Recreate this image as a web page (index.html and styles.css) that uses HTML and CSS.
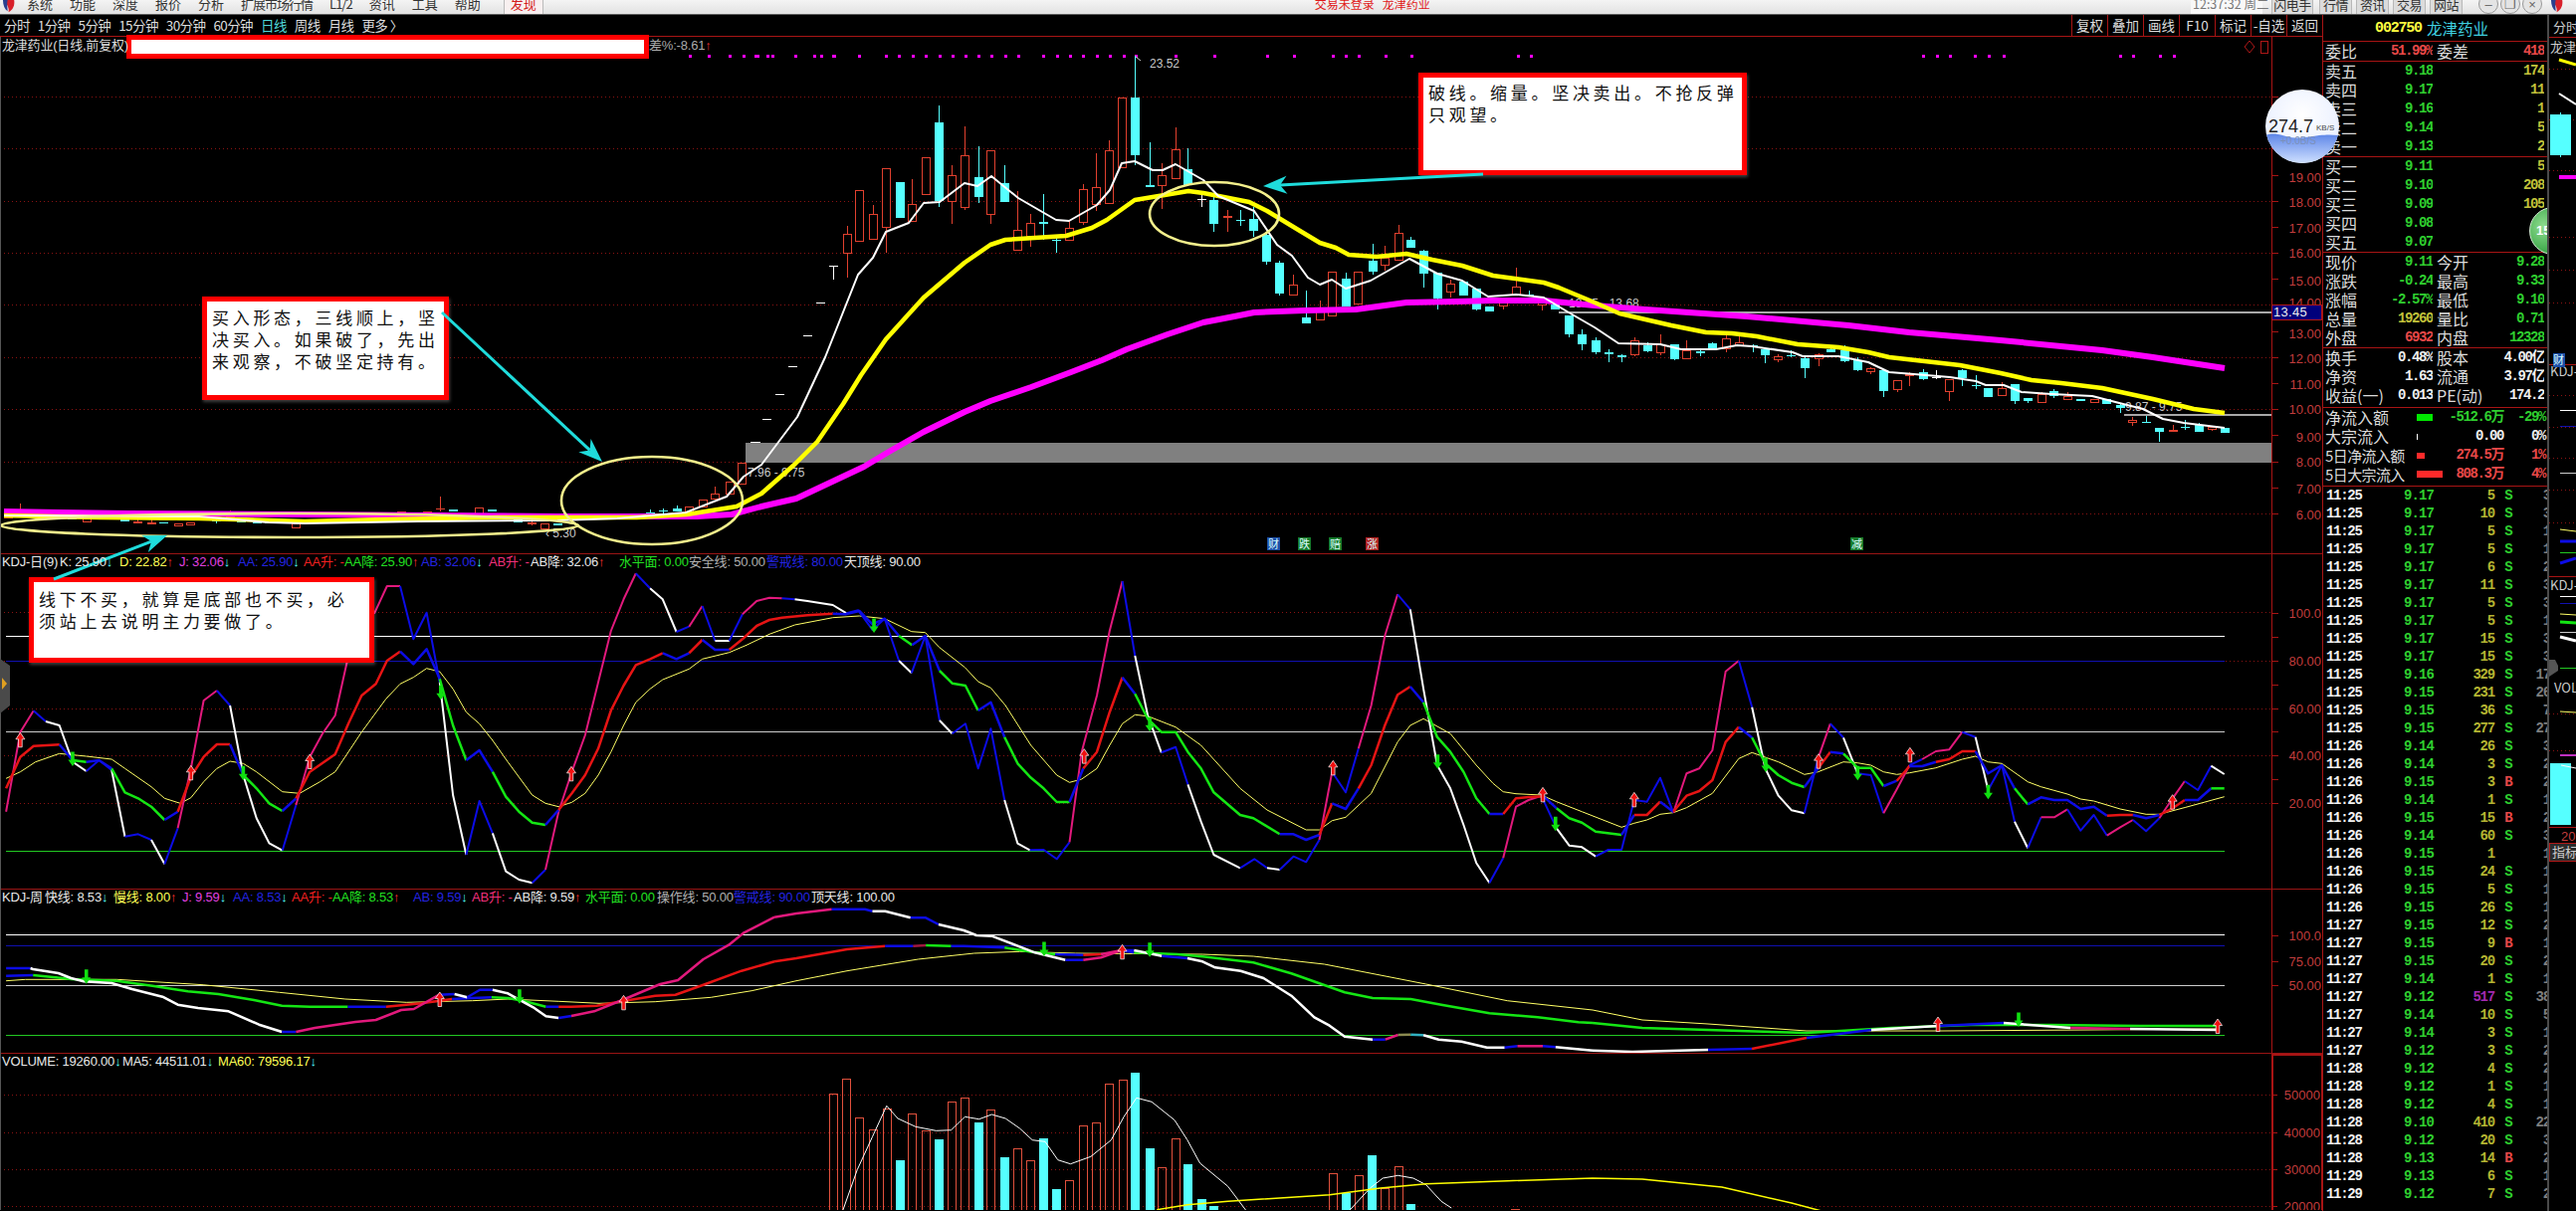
FILE: index.html
```html
<!DOCTYPE html>
<html lang="zh-CN">
<head>
<meta charset="utf-8">
<title>龙津药业</title>
<link rel="stylesheet" href="styles.css">
</head>
<body>
<div class="app">
  <header class="titlebar">
    <svg class="logo" viewBox="0 0 16 15"><path d="M2 0h11c1 5-1 11-6 13C8 9 6 6 2 0z" fill="#d8202a"/><path d="M1 0c0 6 2 10 5 12C6 8 5 4 6 0z" fill="#2a3f8f"/></svg>
    <nav class="menu">
      <span>系统</span><span>功能</span><span>深度</span><span>报价</span><span>分析</span><span class="wide">扩展市场行情</span><span class="wide">L1/2</span><span>资讯</span><span>工具</span><span>帮助</span>
    </nav>
    <span class="find">发现</span>
    <span class="notice">交易未登录&nbsp;&nbsp;&nbsp;龙津药业</span>
    <div class="right-cluster">
      <span class="clock">12:37:32 周二</span>
      <span class="tab tab-wide">闪电手</span><span class="tab">行情</span><span class="tab">资讯</span><span class="tab">交易</span><span class="tab">网站</span>
      <span class="winbtn">–</span><span class="winbtn">❐</span><span class="winbtn">×</span>
      <svg class="logo logo-side" viewBox="0 0 16 15"><path d="M2 0h11c1 5-1 11-6 13C8 9 6 6 2 0z" fill="#d8202a"/><path d="M1 0c0 6 2 10 5 12C6 8 5 4 6 0z" fill="#2a3f8f"/></svg>
    </div>
  </header>

  <div class="workspace">
    <main class="mainwin">
      <div class="chartcol">
        <div class="toolbar">
          <div class="periods">
            <span>分时</span><span>1分钟</span><span>5分钟</span><span>15分钟</span><span>30分钟</span><span>60分钟</span><span class="on">日线</span><span>周线</span><span>月线</span><span>更多 〉</span>
          </div>
          <div class="tools">
            <span>复权</span><span>叠加</span><span>画线</span><span>F10</span><span>标记</span><span>-自选</span><span>返回</span>
          </div>
        </div>
        <div class="panes" id="panes">
          <section class="pane pane-main">
            <div class="plot" id="plot-main"><div class="legend legend-main"><span class="lg-title">龙津药业(日线,前复权)</span><span class="lg-tail">差%:-8.61<i class="up">↑</i></span></div></div>
            <div class="axis" id="axis-main"></div>
          </section>
          <section class="pane pane-kdj">
            <div class="plot" id="plot-kdj"><div class="legend" id="lg-kdj"></div></div>
            <div class="axis" id="axis-kdj"></div>
          </section>
          <section class="pane pane-week">
            <div class="plot" id="plot-week"><div class="legend" id="lg-week"></div></div>
            <div class="axis" id="axis-week"></div>
          </section>
          <section class="pane pane-vol">
            <div class="plot" id="plot-vol"><div class="legend" id="lg-vol"></div></div>
            <div class="axis axis-vol" id="axis-vol"></div>
          </section>
          <div class="banner"></div>
          <div class="callout c1">买入形态，三线顺上，坚<br>决买入。如果破了，先出<br>来观察，不破坚定持有。</div>
          <div class="callout c2">线下不买，就算是底部也不买，必<br>须站上去说明主力要做了。</div>
          <div class="callout c3">破线。缩量。坚决卖出。不抢反弹<br>只观望。</div>
          <svg class="overlay" id="overlay" viewBox="0 38 2333 1179"></svg>
          <div class="pricetag">13.45</div>
        </div>
      </div>

      <aside class="quote">
        <div class="q-title"><span class="code">002750</span><span class="name">龙津药业</span></div>
        <div class="q-sec" id="q-ratio"></div>
        <div class="q-sec" id="q-sell"></div>
        <div class="q-sec" id="q-buy"></div>
        <div class="q-sec" id="q-price"></div>
        <div class="q-sec q-pad" id="q-fund"></div>
        <div class="q-sec q-pad" id="q-flow"></div>
        <div class="trades" id="trades"></div>
        <div class="bubble">15</div>
      </aside>
    </main>
    <div class="gutter"></div>
    <div class="sidewin" id="side"></div>
    <svg class="speed" viewBox="0 0 74 74">
      <defs>
        <radialGradient id="sp" cx="50%" cy="35%" r="70%"><stop offset="0" stop-color="#fff"/><stop offset="1" stop-color="#e4ecff"/></radialGradient>
        <linearGradient id="wv" x1="0" y1="0" x2="0" y2="1"><stop offset="0" stop-color="#5d86e8"/><stop offset="1" stop-color="#cfe0ff"/></linearGradient>
        <clipPath id="spc"><ellipse cx="37" cy="37" rx="37" ry="37"/></clipPath>
      </defs>
      <ellipse cx="37" cy="37" rx="37" ry="37" fill="url(#sp)"/>
      <path clip-path="url(#spc)" d="M0 46c14-5 22 5 40 2s24-3 34-2v28H0z" fill="url(#wv)"/>
      <text class="sp-main" x="3" y="43">274.7</text>
      <text class="sp-unit" x="51" y="41">KB/S</text>
      <text class="sp-sub" x="15" y="55">+0.0B/S</text>
    </svg>
  </div>
</div>
<script src="script.js"></script>
</body>
</html>
```
FILE: styles.css
```css
* { box-sizing: border-box; }
html, body { margin: 0; padding: 0; background: #000; }
body { font-family: "Liberation Sans", "Noto Sans CJK SC", sans-serif; overflow: hidden; }
i { font-style: normal; }

.app { width: 2588px; height: 1217px; display: flex; flex-direction: column; background: #000; overflow: hidden; position: relative; }

/* title bar */
.titlebar { height: 15px; flex: none; display: flex; align-items: flex-start; overflow: hidden;
  background: linear-gradient(#f4f4f4, #e2e2e2); border-bottom: 1px solid #5a5a5a; font: 13px/20px "Noto Sans CJK SC", sans-serif; color: #333; padding-left: 2px; }
.titlebar span { margin-top: -6px; }
.logo { width: 15px; height: 14px; flex: none; }
.menu { display: flex; gap: 17px; margin-left: 10px; flex: none; }
.menu .wide { letter-spacing: -1px; }
.find { margin-left: 23px; width: 40px; height: 26px; text-align: center; color: #d32020; background: #f8f0f0; border-left: 1px solid #bbb; border-right: 1px solid #bbb; flex: none; }
.notice { margin-left: 775px; color: #e01818; flex: none; font-size: 12px; }
.right-cluster { margin-left: auto; display: flex; align-items: flex-start; flex: none; }
.clock { width: 72px; margin-right: 9px; padding-left: 2px; background: #f8f8f8; color: #777; height: 26px; font-size: 12.5px; white-space: nowrap; }
.tab { width: 33px; height: 26px; margin-right: 4px; text-align: center; background: #dcdcdc; border: 1px solid #b8b8b8; letter-spacing: -.5px; }
.tab-wide { width: 42px; margin-right: 6px; }
.tab + .winbtn { margin-left: 12px; }
.winbtn { width: 20px; height: 20px; margin-top: -6px; margin-right: 2px; border-radius: 50%; border: 1px solid #999; background: #e4e4e4; text-align: center; color: #666; font: 13px/20px "Liberation Sans", sans-serif; }
.logo-side { margin-left: 6px; margin-right: 11px; }

/* workspace */
.workspace { flex: 1; display: flex; min-height: 0; position: relative; }
.mainwin { width: 2559px; flex: none; display: flex; }
.gutter { width: 2px; flex: none; background: #4a4a4a; }
.sidewin { flex: 1; overflow: hidden; }
.sidewin svg { display: block; }

.chartcol { width: 2333px; flex: none; display: flex; flex-direction: column; }
.toolbar { height: 22px; flex: none; display: flex; justify-content: space-between; border-bottom: 1px solid #a81414; color: #ddd; font: 13.5px/21px "Noto Sans CJK SC", sans-serif; }
.periods { display: flex; padding-left: 4px; gap: 8px; letter-spacing: -.6px; }
.periods span { white-space: nowrap; }
.periods .on { color: #4fd8d8; }
.tools { display: flex; }
.tools span { width: 36px; text-align: center; border-left: 1px solid #a81414; }

.panes { flex: 1; display: flex; flex-direction: column; position: relative; min-height: 0; }
.pane { display: flex; flex: none; border-bottom: 1px solid #9a1414; }
.pane-main { height: 520px; }
.pane-kdj { height: 337px; }
.pane-week { height: 165px; }
.pane-vol { height: 157px; border-bottom: 0; }
.plot { width: 2282px; flex: none; position: relative; overflow: hidden; }
.plot svg { position: absolute; left: 0; top: 0; display: block; }
.axis { flex: 1; border-left: 1px solid #a81414; overflow: hidden; position: relative; }
.axis svg { display: block; }
.axis-vol { border: 2px solid #a81414; border-bottom: 0; border-right-width: 1px; }
.axis-vol svg { margin: -2px 0 0 -2px; }

.legend { position: relative; z-index: 1; display: flex; height: 16px; padding-left: 2px; font: 13px/16px "Liberation Sans", "Noto Sans CJK SC", sans-serif; white-space: nowrap; letter-spacing: -.2px; }
.legend span { flex: none; display: block; }
.legend .up, .lg-tail .up { color: #f33; font-weight: 700; }
.legend .dn { color: #5ff; font-weight: 700; }
.legend-main { height: 18px; line-height: 18px; color: #ddd; }
.lg-title { width: 650px; }
.lg-tail { color: #aaa; }

.c-wh { color: #e8e8e8; } .c-ye { color: #ffff55; } .c-mg { color: #e040e0; } .c-bl { color: #2424e0; }
.c-re { color: #f02020; } .c-gr { color: #22e022; } .c-pk { color: #f0307a; } .c-gy { color: #b0b0b0; }

.banner { position: absolute; left: 127px; top: -2px; width: 525px; height: 24px; background: #fff; border: 5px solid #ff0000; }
.callout { position: absolute; background: #fff; border: 5px solid #f00; color: #111; font: 17px/22px "Noto Sans CJK SC", sans-serif; letter-spacing: 3.7px; padding: 5px 5px; white-space: nowrap; box-shadow: 1px 2px 3px rgba(255,255,255,.25); }
.c1 { left: 203px; top: 261px; width: 248px; height: 104px; }
.c2 { left: 29px; top: 543px; width: 347px; height: 86px; padding-top: 6px; }
.c3 { left: 1425px; top: 36px; width: 330px; height: 103px; padding-top: 4px; }
.overlay { position: absolute; left: 0; top: 0; width: 2333px; height: 1179px; pointer-events: none; }
.pricetag { position: absolute; left: 2282px; top: 269px; width: 51px; height: 16px; background: #00007c; border: 1px solid #b01818; color: #eee; font: 13px/14px "Liberation Sans", sans-serif; padding-left: 1px; letter-spacing: .3px; }

/* quote */
.quote { flex: 1; border-left: 1px solid #a81414; position: relative; overflow: hidden; color: #ddd; }
.q-title { height: 27px; border-bottom: 1px solid #a81414; display: flex; justify-content: center; align-items: center; gap: 5px; padding-right: 7px; }
.code { color: #ffff40; font: 700 15px "Liberation Mono", monospace; letter-spacing: -1.2px; }
.name { color: #3fd0e0; font: 15.5px "Noto Sans CJK SC", sans-serif; }
.q-sec { border-bottom: 1px solid #a81414; }
.q-pad { padding-bottom: 2px; }
.qrow { height: 19px; display: grid; grid-template-columns: 108px 108px; column-gap: 4px; padding-left: 2px; }
.cell { display: flex; justify-content: space-between; align-items: center; overflow: hidden; }
.lbl { font: 16px/19px "Noto Sans CJK SC", sans-serif; color: #dcdcdc; white-space: nowrap; flex: none; }
.num { font: 700 14px/19px "Liberation Mono", "Noto Sans CJK SC", monospace; letter-spacing: -1.4px; white-space: nowrap; margin-left: auto; }
.g { color: #2fcf2f; } .o { color: #c2c23a; } .r { color: #e84848; } .w { color: #eee; } .n { color: #7e7e7e; } .v { color: #a32ab0; } .e { color: #b4b432; }
.frow { height: 19px; display: grid; grid-template-columns: 92px 30px 57px 42px; padding-left: 2px; align-items: center; }
.frow .lbl-s { font: 15px/19px "Noto Sans CJK SC", sans-serif; letter-spacing: -.6px; white-space: nowrap; color: #dcdcdc; }
.frow .num { text-align: right; }
.fbar { display: block; height: 7px; }
.fb1 { width: 16px; background: #00e800; }
.fb2 { width: 1px; background: #fff; height: 6px; }
.fb3 { width: 8px; background: #ff2a2a; height: 6px; }
.fb4 { width: 26px; background: #ff2a2a; }
.trow { height: 18px; display: grid; grid-template-columns: 78px 30px 61px 25px 31px; padding-left: 3px; font: 700 14px/18px "Liberation Mono", monospace; letter-spacing: -.9px; }
.trow .t-t { color: #f2f2f2; letter-spacing: -1.3px; }
.trow .t-v, .trow .t-n { text-align: right; letter-spacing: -1.2px; }
.trow .t-s { text-align: center; padding-left: 3px; }
.bubble { position: absolute; left: 207px; top: 193px; width: 48px; height: 48px; border-radius: 50%; border: 1px solid #cfe8cf; background: radial-gradient(circle at 30% 40%, #8fdc8f, #2c9c3c 75%); color: #fff; font: 700 13px/46px "Liberation Sans", sans-serif; padding-left: 6px; }

.speed { position: absolute; left: 2276px; top: 75px; width: 74px; height: 74px; }
.sp-main { font: 18px "Liberation Sans", sans-serif; fill: #222; }
.sp-unit { font: 8px "Liberation Sans", sans-serif; fill: #444; }
.sp-sub { font: 10px "Liberation Sans", sans-serif; fill: #7c90b8; }

/* svg text */
.tx { font: 12px "Liberation Sans", sans-serif; fill: #c8c8c8; }
.ax { font: 13px "Liberation Sans", sans-serif; fill: #c23c3c; text-anchor: end; }
.mk { font: 11px "Noto Sans CJK SC", sans-serif; fill: #dff; }
.sd { font: 13px "Noto Sans CJK SC", "Liberation Sans", sans-serif; fill: #ccc; }
.sd-r { font: 13px "Liberation Sans", sans-serif; fill: #c23c3c; }
```
FILE: script.js
```js
(function () {
  var $ = function (id) { return document.getElementById(id); };
  var COL = { p: '#e2197c', b: '#0c0ce6', w: '#ffffff', r: '#e61414', g: '#14e614', y: '#ffff66', d: '#a01840', n: '#8a8a50', c: '#30b0c0', m: '#ff00ff', Y: '#ffff00' };
  var SX = 1.96, SY = 3;

  function svg(x, y, w, h, inner, cls) {
    return '<svg xmlns="http://www.w3.org/2000/svg" width="' + w + '" height="' + h + '" viewBox="' + x + ' ' + y + ' ' + w + ' ' + h + '"' + (cls ? ' class="' + cls + '"' : '') + '>' + inner + '</svg>';
  }
  function ln(x1, y1, x2, y2, c, w, extra) {
    return '<line x1="' + x1 + '" y1="' + y1 + '" x2="' + x2 + '" y2="' + y2 + '" stroke="' + c + '" stroke-width="' + (w || 1) + '" ' + (extra || '') + '/>';
  }
  function rect(x, y, w, h, f, extra) {
    return '<rect x="' + x + '" y="' + y + '" width="' + w + '" height="' + h + '" fill="' + f + '" ' + (extra || '') + '/>';
  }
  function dots(ys, c) {
    return ys.map(function (y) { return ln(0, y + .5, 2282, y + .5, c || '#8a1212', 1, 'stroke-dasharray="1 3"'); }).join('');
  }
  /* A series is written as chunks of crops: [x0, y0, scaleX, scaleY, "c x,y x,y c x,y"]. */
  function series(chunks, width, defaultCol) {
    var out = '', prev = null, col = defaultCol || 'w', run = [];
    function flush() {
      if (run.length > 1) out += '<polyline fill="none" stroke-linejoin="round" stroke="' + COL[col] + '" stroke-width="' + width + '" points="' + run.join(' ') + '"/>';
    }
    chunks.forEach(function (ch) {
      ch[4].trim().split(/\s+/).forEach(function (tok) {
        if (tok.indexOf(',') < 0) {
          flush();
          col = tok;
          run = prev ? [prev] : [];
          return;
        }
        var a = tok.split(',');
        var pt = (ch[0] + a[0] / ch[2]).toFixed(1) + ',' + (ch[1] + a[1] / ch[3]).toFixed(1);
        run.push(pt);
        prev = pt;
      });
    });
    flush();
    return out;
  }
  function upArrow(x, y) {
    return '<path d="M' + x + ' ' + (y - 7) + 'l4.5 6.5h-2.7v8h-3.6v-8h-2.7z" fill="#f01010" stroke="#fff" stroke-width=".7"/>';
  }
  function dnArrow(x, y) {
    return '<path d="M' + x + ' ' + (y + 7) + 'l4.5 -6.5h-2.7v-8h-3.6v8h-2.7z" fill="#10e010"/>';
  }
  function arrows(base, ups, dns) {
    var s = '';
    ups.forEach(function (p) { s += upArrow(base[0] + p[0] / (p[2] || SX), base[1] + p[1] / (p[2] || SY)); });
    dns.forEach(function (p) { s += dnArrow(base[0] + p[0] / (p[2] || SX), base[1] + p[1] / (p[2] || SY)); });
    return s;
  }

  /* ---------- candles: [cropX, bodyTop, bodyBottom, high, low, type] in crop pixels ---------- */
  var Z4 = [0, 290], Z5 = [750, 50], Z8 = [1500, 250];
  var candles = [
    [Z4, [[15,683,692,0,0,'r'],[40,682,688,650,0,'r'],[90,688,690,0,0,'c'],[142,695,699,0,0,'c'],[170,695,706,0,0,'r'],[195,690,696,0,0,'r'],[245,697,704,0,0,'c'],[270,704,706,695,712,'r'],[298,707,709,700,714,'r'],[322,707,712,0,0,'c'],[350,710,718,0,0,'r'],[375,708,714,0,0,'r'],[425,703,705,695,712,'c'],[453,680,690,672,0,'r'],[475,704,708,0,0,'c'],[505,706,710,0,0,'c'],[530,708,712,0,0,'c'],[582,710,722,0,0,'r'],[790,675,682,0,0,'r'],[815,680,690,0,0,'r'],[840,675,685,0,0,'r'],[867,665,669,630,675,'R'],[892,670,675,0,0,'c'],[943,663,680,0,0,'r'],[968,668,675,0,0,'c'],[995,680,685,0,0,'r'],[1020,700,708,692,0,'c'],[1046,707,709,700,716,'r'],[1072,710,725,0,0,'r'],[1097,712,716,0,0,'c'],[1253,680,685,0,0,'r'],[1280,677,679,670,684,'c'],[1305,672,674,665,680,'c'],[1332,667,675,658,0,'c'],[1357,660,675,0,0,'r'],[1383,638,660,0,0,'r'],[1408,620,635,600,0,'r'],[1436,585,622,0,0,'r'],[1461,528,590,0,0,'r'],
      [1485,465,467,0,0,'w'],[1510,396,398,0,0,'w'],[1535,321,323,0,0,'w'],[1560,237,239,0,0,'w']]],
    [Z5, [[17,1186,1188,0,0,'w'],[145,766,768,0,0,'w'],[119,864,866,0,0,'w'],[171,655,657,655,697,'w'],
      [197,558,616,533,690,'r'],[222,427,578,0,0,'r'],[249,498,572,470,0,'r'],[275,361,538,0,615,'r'],[301,402,510,0,0,'c'],[326,468,520,393,0,'r'],[352,327,437,0,0,'r'],[379,222,458,171,478,'c'],[404,381,460,350,527,'r'],[430,321,476,235,485,'r'],[456,387,446,295,464,'c'],[481,307,499,0,527,'r'],[508,405,461,352,0,'c'],[534,547,605,430,0,'r'],[559,526,563,498,598,'r'],[585,521,527,438,575,'c'],[610,576,579,560,614,'c'],[636,541,577,518,0,'r'],[662,424,523,408,532,'r'],[688,418,467,316,490,'r'],[714,307,466,277,0,'r'],[739,148,358,0,0,'r'],[765,147,321,20,350,'c'],[793,411,416,282,0,'c'],[818,382,412,345,482,'r'],[844,304,391,238,0,'r'],[869,364,411,300,0,'c'],[895,454,457,430,478,'w'],[920,456,527,440,552,'c'],[947,505,509,487,552,'R'],[972,516,519,487,535,'c'],[998,514,549,478,566,'c'],[1024,560,642,552,650,'c'],[1049,645,738,640,745,'c'],[1076,712,740,682,745,'r'],[1102,810,827,728,0,'c'],[1128,788,817,760,0,'r'],[1153,673,803,0,0,'r'],[1179,693,777,675,0,'c'],[1204,673,767,0,0,'r'],[1232,639,672,588,680,'c'],[1257,630,650,595,668,'r'],[1283,556,635,530,0,'r'],[1308,576,600,567,0,'c'],[1333,610,677,605,720,'c'],[1360,675,752,0,785,'c'],[1386,708,733,695,750,'r'],[1411,702,744,0,0,'c'],[1437,722,785,0,790,'c'],[1463,776,793,0,0,'c'],[1489,760,775,0,785,'r']]],
    [Z8, [[45,118,140,60,0,'r'],[71,140,148,130,0,'c'],[97,155,170,0,188,'r'],[122,170,186,0,0,'c'],[148,204,262,0,270,'c'],[175,262,290,247,308,'c'],[201,280,315,270,320,'c'],[227,316,322,306,345,'c'],[252,324,331,320,345,'c'],[278,278,320,270,326,'r'],[304,294,312,285,316,'c'],[330,292,315,262,325,'r'],[356,292,336,0,338,'c'],[381,310,334,280,336,'r'],[407,311,318,305,326,'c'],[432,288,306,285,0,'c'],[459,274,304,258,316,'r'],[485,284,294,268,0,'r'],[511,295,297,290,315,'c'],[536,306,325,0,347,'c'],[561,327,335,320,345,'r'],[587,323,325,310,330,'c'],[614,332,363,325,392,'c'],[640,322,332,318,357,'r'],[665,305,314,295,0,'c'],[691,310,342,295,345,'c'],[717,338,369,330,371,'c'],[743,362,371,360,380,'r'],[769,368,431,365,450,'c'],[795,398,425,0,435,'r'],[820,382,384,375,418,'r'],[846,376,397,365,399,'c'],[872,390,392,370,395,'w'],[898,397,433,0,462,'r'],[924,370,393,365,418,'c'],[950,414,416,385,425,'c'],[975,423,449,0,0,'c'],[1002,422,443,405,0,'r'],[1027,412,462,0,470,'c'],[1053,454,461,0,468,'c'],[1079,440,465,435,0,'r'],[1104,433,448,425,454,'c'],[1130,448,457,435,0,'r'],[1157,457,462,0,0,'c'],[1183,457,466,0,0,'r'],[1208,457,470,0,0,'c'],[1234,475,483,470,498,'c'],[1259,519,526,510,537,'r'],[1286,524,526,507,527,'c'],[1312,543,555,0,585,'c'],[1338,550,554,535,0,'R'],[1363,539,541,520,550,'c'],[1389,535,555,527,0,'c'],[1415,541,545,0,553,'r'],[1441,544,557,0,0,'c']]]
  ];
  function candleSvg() {
    var s = '';
    candles.forEach(function (blk) {
      var b = blk[0];
      blk[1].forEach(function (c) {
        var x = Math.round(b[0] + c[0] / SX), t = Math.round(b[1] + c[1] / SY), bt = Math.round(b[1] + c[2] / SY);
        var hi = c[3] ? Math.round(b[1] + c[3] / SY) : t, lo = c[4] ? Math.round(b[1] + c[4] / SY) : bt;
        var col = c[5] === 'c' ? '#55ffff' : c[5] === 'w' ? '#ffffff' : '#e0402e';
        if (hi < t) s += ln(x + .5, hi, x + .5, t, col);
        if (lo > bt) s += ln(x + .5, bt, x + .5, lo, col);
        if (c[5] === 'r') s += '<rect x="' + (x - 3.5) + '" y="' + (t + .5) + '" width="8" height="' + Math.max(bt - t, 1) + '" fill="#000" stroke="' + col + '"/>';
        else s += rect(x - 4, t, 9, Math.max(bt - t, 1), col);
      });
    });
    return s;
  }

  /* ---------- main pane ---------- */
  var ma60 = 'm 4,515 60,516 130,517 300,518 560,520 640,520 700,520 735,518 765,510 800,502 868,470 893,455 928,435 969,415 995,404 1036,390 1076,375 1107,363 1132,352 1173,337 1209,325 1240,319 1260,315 1311,313 1362,312 1413,305 1464,304 1500,303 1551,303 1602,308 1653,312 1755,319 1857,328 1918,335 2010,343 2112,353 2163,360 2235,371';
  var ma20 = 'Y 4,519 100,521 200,522 306,525 388,523 500,521 640,521 690,518 715,514 740,510 765,497 798,468 821,445 847,407 865,378 890,342 928,300 969,265 995,247 1010,242 1071,238 1097,230 1112,222 1140,202 1158,199 1194,193 1209,195 1255,204 1273,213 1306,233 1326,245 1342,250 1355,257 1383,259 1413,256 1439,262 1469,268 1500,278 1551,285 1566,290 1602,305 1627,316 1679,328 1714,335 1740,336 1765,339 1806,347 1847,350 1877,355 1898,360 1969,368 2010,376 2041,383 2071,386 2112,391 2163,402 2204,412 2235,416';
  var ma5 = 'w 4,519 200,520 270,526 306,527 420,525 560,524 620,522 689,516 730,500 747,480 765,468 801,420 829,360 862,277 877,260 890,234 913,225 928,205 944,204 969,185 982,188 996,178 1023,200 1061,222 1074,223 1102,207 1115,192 1127,165 1140,163 1158,172 1168,172 1181,166 1209,182 1224,198 1260,213 1283,247 1298,258 1314,280 1326,287 1338,282 1352,291 1377,283 1416,261 1444,276 1469,283 1495,299 1523,297 1551,300 1576,315 1602,330 1626,346 1668,347 1689,352 1724,352 1745,348 1760,349 1801,355 1811,359 1847,359 1877,365 1898,375 1923,377 1959,380 1985,384 1995,388 2013,388 2031,395 2061,397 2102,399 2133,407 2153,412 2173,422 2194,426 2235,431';

  var magentaDots = [692,711,732,746,760,775,798,817,836];
  [15,40,95,145,170,220,272,298,325,350,378,403,430,455,480,507,533,583,610,635,660,687,713,740,765,843,920,1023,1077,1153,1178,1203,1257,1308,1517,1543].forEach(function (p) { magentaDots.push(Math.round(750 + p / SX)); });
  magentaDots = magentaDots.concat([1931,1945,1958,1983,1997,2012,2129,2142,2169,2183]);

  function marker(x, t, bg) {
    return rect(x, 541, 13, 13, bg) + '<text class="mk" x="' + (x + 1) + '" y="552">' + t + '</text>';
  }
  var main = '';
  main += dots([98,150,203,255,307,360,412,465,517]);
  main += rect(749, 446, 1533, 20, '#808080');
  main += rect(1566, 314, 716, 2, '#a8a8a8') + rect(2134, 417, 148, 2, '#a8a8a8');
  magentaDots.forEach(function (x) { main += rect(x, 56, 3, 3, '#ff00ff'); });
  main += '<text class="tx" x="751" y="480">7.96 - 9.75</text>';
  main += '<text class="tx" x="1576" y="310">13.45 - 13.68</text>';
  main += '<text class="tx" x="2135" y="414">9.87 - 9.75</text>';
  main += candleSvg();
  main += series([[0,0,1,1,ma60]], 6);
  main += series([[0,0,1,1,ma20]], 4.5);
  main += series([[0,0,1,1,ma5]], 2);
  main += ln(1141, 58, 1146, 62, '#ccc') + '<text class="tx" x="1155" y="69">23.52</text>';
  main += '<text class="tx" x="548" y="541">‹ 5.30</text>';
  main += marker(1273, '财', '#1c4fa8') + marker(1304, '跌', '#157a2a') + marker(1335, '赔', '#157a2a') + marker(1372, '涨', '#b02020');
  main += marker(1859, '减', '#157a2a');
  main += '<path d="M2260 42l5 6-5 6-5-6z" fill="none" stroke="#b01818"/><rect x="2271.5" y="42.5" width="7" height="12" fill="none" stroke="#b01818"/>';
  $('plot-main').insertAdjacentHTML('afterbegin', svg(0, 38, 2282, 519, main));

  /* ---------- KDJ daily ---------- */
  var kJ = [
    [0,560,SX,SY,'p 12,770 40,530 66,466 b 90,498 w 117,510 143,620 170,648 b 195,615 220,645 w 246,845 b 272,838 298,855 w 324,928 b 350,820 p 376,640 401,435 427,405 b 453,450 w 479,660 505,790 530,865 556,887 b 583,750 p 610,605 635,535 660,480 686,300 712,200 738,170 762,90 788,90 b 814,250 840,170 866,380 w 892,720 918,900 b 944,738 970,835 w 996,950 1022,975 1048,985 b 1074,945 p 1100,770 1126,650 1152,540 1178,380 1203,225 1228,130 1252,52 b 1280,97 w 1305,130 1332,228 b 1357,212 p 1383,150 b 1408,255 w 1436,255 b 1462,175'],
    [750,560,SX,SY,'p 20,135 45,125 70,127 b 95,130 w 120,135 170,147 197,172 b 220,163 248,222 272,188 300,315 w 325,352 b 352,240 380,495 w 405,535 b 431,505 456,640 481,520 508,735 w 534,866 558,886 b 585,885 611,913 636,862 p 660,590 690,420 715,225 740,75 b 765,300 w 790,480 817,592 b 845,575 869,688 w 895,800 920,900 972,940 b 1000,913 1025,940 w 1050,945 b 1077,905 1102,922 1128,855 p 1153,650 b 1180,712 1205,580 p 1230,450 1257,240 1282,115 b 1307,160 w 1333,400 1360,630 1386,700 1412,810 1437,925 1463,985'],
    [1500,560,SX,SY,'b 20,910 p 45,755 70,735 95,722 b 125,820 w 150,872 175,877 202,905 b 227,885 253,885 278,735 303,740 329,668 355,773 p 381,655 406,640 432,585 458,347 484,315 b 510,455 w 536,640 562,722 588,766 613,775 b 640,610 p 664,505 b 690,547 w 718,655 b 744,660 769,775 p 795,703 820,630 b 845,612 p 872,588 898,583 924,530 b 950,545 w 975,705 b 1002,630 1027,800 w 1053,880 b 1079,787 p 1105,787 1131,763 b 1157,827 1183,780 1209,842 p 1235,817 1260,795 b 1286,829 1312,790 p 1338,730 1362,678 b 1388,705 1414,632 w 1440,657']
  ];
  var kK = [
    [0,560,SX,SY,'r 12,700 40,605 66,572 117,568 b 143,615 g 170,620 b 195,615 220,640 g 246,712 272,730 298,755 324,795 b 350,770 r 376,665 401,605 427,567 453,567 b 479,660 g 505,700 530,745 556,768 b 583,730 r 610,650 660,597 686,505 712,420 740,385 762,315 788,287 b 814,325 840,280 866,370 g 892,510 918,615 b 944,585 970,650 g 996,725 1022,770 1048,803 1074,810 b 1100,765 r 1126,715 1152,660 1178,580 1203,465 1228,390 1252,328 1280,310 1305,292 b 1332,310 1357,292 r 1383,252 b 1408,282 1436,282 r 1462,250'],
    [750,560,SX,SY,'r 20,210 45,192 70,185 120,178 170,173 b 195,175 222,165 248,205 272,188 300,240 g 326,268 b 352,240 380,345 g 405,383 431,390 456,465 b 481,440 508,545 g 534,625 558,665 585,700 611,741 636,741 b 663,640 r 690,590 715,470 740,365 b 765,415 g 790,490 817,530 845,530 869,590 895,640 920,712 972,780 998,790 1050,838 b 1077,838 1102,855 1128,840 r 1153,745 b 1180,762 1205,700 r 1230,630 1257,510 1282,418 1307,393 b 1333,440 g 1360,545 1386,590 1412,650 1437,730 1463,777'],
    [1500,560,SX,SY,'b 20,777 r 45,730 70,726 100,724 b 125,760 g 150,790 175,803 202,830 253,840 b 278,780 r 303,780 329,740 b 355,770 r 381,722 406,708 432,675 458,560 484,515 b 510,547 g 536,625 562,660 588,683 613,696 b 640,640 r 664,590 b 690,595 g 718,638 744,638 769,693 b 795,677 r 820,633 b 845,633 872,620 r 898,612 924,588 950,588 b 975,655 1002,630 1027,700 g 1053,748 b 1079,727 1105,735 1131,735 1157,762 1183,755 1209,782 r 1235,780 1260,780 b 1286,790 1312,780 r 1338,760 1362,735 b 1388,735 1414,700 g 1440,700']
  ];
  var kD = [
    [0,560,SX,SY,'y 12,670 40,650 70,620 117,595 170,603 220,612 246,640 298,695 324,730 355,745 376,728 401,680 427,640 453,618 479,625 505,650 556,710 590,715 630,680 660,650 712,530 760,430 788,385 814,365 840,338 866,348 892,400 918,470 944,505 970,555 1000,620 1048,720 1074,745 1100,755 1126,742 1152,715 1178,660 1203,590 1228,510 1252,440 1280,400 1305,372 1357,340 1383,310 1436,290'],
    [750,560,SX,SY,'0,268 45,235 95,207 170,185 222,180 272,188 325,227 352,230 380,275 430,335 456,378 481,397 510,450 560,570 611,660 636,682 660,672 690,640 715,570 740,505 765,478 790,482 845,515 895,570 972,700 1025,765 1102,825 1128,825 1153,797 1180,787 1230,715 1282,560 1307,510 1333,490 1386,535 1437,630'],
    [1500,560,SX,SY,'0,685 20,710 45,716 95,720 125,740 175,770 253,817 278,805 303,795 329,778 355,773 381,758 432,715 484,610 510,592 562,620 613,658 640,650 690,620 718,623 744,630 769,650 795,658 820,653 872,638 924,612 950,603 975,620 1002,625 1053,680 1079,695 1131,717 1157,732 1183,738 1235,762 1286,778 1312,778 1364,757 1440,725']
  ];
  var kdj = dots([616,665,713,760,808]);
  kdj += ln(6, 640.5, 2235, 640.5, '#ffffff') + ln(6, 665.5, 2235, 665.5, '#1010b0') + ln(6, 736.5, 2235, 736.5, '#cccccc') + ln(6, 856.5, 2235, 856.5, '#22c822');
  kdj += series(kD, 1) + series(kJ, 2) + series(kK, 2.5);
  kdj += arrows([0,560], [[40,553],[376,652],[610,618],[1125,655]], [[143,612],[479,655],[868,412]]);
  kdj += arrows([750,560], [[665,602],[1155,637]], [[251,210],[794,508],[1361,620]]);
  kdj += arrows([1500,560], [[98,718],[278,733],[641,617],[821,598],[1338,740]], [[123,808],[537,630],[718,655],[975,712]]);
  $('plot-kdj').insertAdjacentHTML('afterbegin', svg(0, 558, 2282, 336, kdj));

  /* ---------- KDJ weekly ---------- */
  var wJ = [
    [0,880,SX,SY,'b 12,282 60,282 w 65,285 115,297 140,312 165,322 220,327 260,345 320,368 350,392 390,402 450,412 510,452 555,474 b 583,474 p 620,462 700,444 740,438 790,408 815,405 865,362 b 895,360 w 920,370 b 945,347 970,347 w 1000,358 1050,400 1075,427 1100,432 b 1125,426 p 1170,412 1230,375 1300,330 1335,318 1385,255 1435,212 1465,175 1525,128'],
    [800,880,SX,SY,'p 0,117 70,104 b 135,104 150,110 w 175,110 225,130 b 255,130 280,150 w 330,168 355,183 385,185 470,235 530,257 b 565,257 p 600,250 640,228 b 665,228 w 720,245 b 770,252 w 800,262 825,280 875,290 920,312 975,365 1020,430 1050,455 1080,488 1135,497 b 1160,497 p 1185,483 n 1210,482 c 1235,484 w 1265,497 1310,503 1360,521 1395,521 b 1420,517 p 1470,517 b 1495,520 w 1568,530'],
    [0,0,1,1,'w 1640,1058 1716,1056 b 1760,1055 r 1815,1044 b 1880,1036 w 1947,1032 b 2013,1029 w 2080,1034 p 2140,1035 w 2228,1036']
  ];
  var wK = [
    [0,880,SX,SY,'b 12,305 65,303 g 110,310 140,315 230,320 300,335 370,352 430,360 500,378 555,395 610,398 685,398 b 760,398 r 830,388 890,375 b 930,372 968,370 g 1000,372 1030,380 1075,398 b 1100,398 r 1125,398 1175,395 1230,380 1290,365 1330,362 1385,332 1460,290 1525,262'],
    [800,880,SX,SY,'r 0,252 100,225 175,215 b 230,215 d 255,213 g 305,215 b 330,215 410,220 g 465,233 510,240 b 565,242 r 600,240 p 640,228 b 665,235 g 750,240 800,247 900,265 975,298 1080,355 1135,372 1210,375 1270,392 1365,418 1460,430 1540,445 1568,447'],
    [0,0,1,1,'g 1650,1034 1716,1036 1815,1039 1900,1034 1980,1031 2060,1031 2150,1032 2228,1032']
  ];
  var wD = [
    [0,880,SX,SY,'y 12,320 50,316 230,316 400,332 550,355 680,375 800,385 930,380 1000,375 1100,382 1180,388 1290,383 1400,370 1480,350'],
    [800,880,SX,SY,'0,320 100,290 240,255 350,237 440,232 550,237 800,240 900,246 1040,270 1240,330 1400,380 1568,408'],
    [0,0,1,1,'1650,1026 1716,1030 1815,1037 1950,1037 2100,1036 2228,1035']
  ];
  var week = ln(6, 940.5, 2235, 940.5, '#ffffff') + ln(6, 951.5, 2235, 951.5, '#1010b0') + ln(6, 991.5, 2235, 991.5, '#cccccc') + ln(6, 1041.5, 2235, 1041.5, '#22c822');
  week += series(wD, 1) + series(wK, 2.5) + series(wJ, 2.5);
  week += arrows([0,880], [[866,375],[1228,385]], [[170,308],[1023,368]]);
  week += arrows([800,880], [[642,232]], [[488,225],[696,227]]);
  week += upArrow(1947, 1030) + dnArrow(2028, 1026) + upArrow(2228, 1032);
  $('plot-week').insertAdjacentHTML('afterbegin', svg(0, 895, 2282, 164, week));

  /* ---------- volume ---------- */
  var bars = [[73,661,'r'],[98,616,'r'],[124,733,'r'],[150,769,'r'],[178,705,'r'],[203,861,'c'],[228,721,'r'],[254,771,'r'],[281,798,'c'],[306,685,'r'],[332,673,'r'],[358,747,'c'],[383,709,'r'],[410,852,'c'],[436,826,'r'],[461,862,'r'],[487,795,'c'],[512,948,'c'],[538,922,'r'],[565,757,'r'],[590,747,'r'],[616,631,'r'],[642,619,'r'],[667,597,'c'],[695,825,'c'],[720,883,'r'],[746,796,'r'],[771,873,'c'],[797,978,'c'],[822,999,'c'],[1056,901,'r'],[1081,960,'c'],[1107,907,'r'],[1133,846,'c'],[1159,945,'r'],[1185,880,'r'],[1210,993,'c'],[1416,1008,'r']];
  var vol = dots([1101,1139,1176,1213]);
  bars.forEach(function (b) {
    var x = Math.round(800 + b[0] / SX), y = Math.round(880 + b[1] / SY);
    if (b[2] === 'c') vol += rect(x - 4, y, 9, 1220 - y, '#55ffff');
    else vol += '<rect x="' + (x - 3.5) + '" y="' + (y + .5) + '" width="8" height="' + (1225 - y) + '" fill="none" stroke="#e0503c"/>';
  });
  vol += series([[800,880,SX,SY,'w 92,1011 120,890 150,790 178,697 200,735 235,760 275,772 305,770 332,730 360,737 385,723 412,735 440,765 465,800 490,805 515,860 540,872 580,850 620,800 645,730 670,673 700,685 745,740 770,800 795,870 850,940 885,1011']], 1);
  vol += series([[800,880,SX,SY,'w 1090,1011 1130,945 1155,915 1185,907 1215,915 1240,935 1270,985 1290,1005']], 1);
  vol += series([[800,880,SX,SY,'Y 710,1010 770,995 850,985 1050,965 1150,945 1240,932 1400,923 1568,915'],[0,0,1,1,'1650,1186 1730,1194 1800,1210 1830,1218']], 1.5);
  $('plot-vol').insertAdjacentHTML('afterbegin', svg(0, 1060, 2282, 157, vol));

  /* ---------- axes ---------- */
  function axis(id, y0, h, labels, ticks) {
    var s = '';
    ticks.forEach(function (t) { s += ln(2282, t + .5, 2288, t + .5, '#a81414'); });
    labels.forEach(function (l) { s += '<text class="ax" x="2331" y="' + (l[1] + 5) + '">' + l[0] + '</text>'; });
    $(id).innerHTML = svg(2282, y0, 51, h, s);
  }
  axis('axis-main', 38, 519,
    [['19.00',179],['18.00',204],['17.00',230],['16.00',255],['15.00',283],['14.00',305],['13.00',336],['12.00',361],['11.00',387],['10.00',412],['9.00',440],['8.00',465],['7.00',492],['6.00',518]],
    [98,124,150,177,203,229,255,281,307,334,360,386,412,438,465,491,517]);
  axis('axis-kdj', 558, 336, [['100.0',617],['80.00',665],['60.00',713],['40.00',760],['20.00',808]], [617,641,665,689,713,736,760,784,808]);
  axis('axis-week', 895, 164, [['100.0',941],['75.00',967],['50.00',991]], [941,967,991]);
  axis('axis-vol', 1060, 157, [['50000',1101],['40000',1139],['30000',1176],['20000',1213]], [1101,1139,1176,1213]);

  /* ---------- legends: [x, text, colour class, arrow] ---------- */
  function legend(id, items) {
    var html = '';
    items.forEach(function (it, i) {
      var next = items[i + 1] ? items[i + 1][0] : it[0] + 90;
      var ar = it[3] === 'u' ? '<i class="up">↑</i>' : it[3] === 'd' ? '<i class="dn">↓</i>' : '';
      html += '<span class="' + it[2] + '" style="width:' + (next - it[0]) + 'px">' + it[1] + ar + '</span>';
    });
    $(id).innerHTML = html;
  }
  legend('lg-kdj', [[2,'KDJ-日(9)','c-wh'],[60,'K: 25.90','c-wh','d'],[120,'D: 22.82','c-ye','u'],[180,'J: 32.06','c-mg','d'],[239,'AA: 25.90','c-bl','d'],[305,'AA升: -','c-re'],[346,'AA降: 25.90','c-gr','u'],[423,'AB: 32.06','c-bl','d'],[491,'AB升: -','c-pk'],[533,'AB降: 32.06','c-wh','u'],[622,'水平面: 0.00','c-gr'],[692,'安全线: 50.00','c-gy'],[770,'警戒线: 80.00','c-bl'],[848,'天顶线: 90.00','c-wh']]);
  legend('lg-week', [[2,'KDJ-周','c-wh'],[45,'快线: 8.53','c-wh','d'],[114,'慢线: 8.00','c-ye','u'],[183,'J: 9.59','c-mg','d'],[234,'AA: 8.53','c-bl','d'],[293,'AA升: -','c-re'],[334,'AA降: 8.53','c-gr','u'],[415,'AB: 9.59','c-bl','d'],[474,'AB升: -','c-pk'],[516,'AB降: 9.59','c-wh','u'],[588,'水平面: 0.00','c-gr'],[660,'操作线: 50.00','c-gy'],[737,'警戒线: 90.00','c-bl'],[815,'顶天线: 100.00','c-wh']]);
  legend('lg-vol', [[2,'VOLUME: 19260.00','c-wh','d'],[123,'MA5: 44511.01','c-wh','d'],[219,'MA60: 79596.17','c-ye','d']]);

  /* ---------- overlay: hand drawn marks ---------- */
  function drawnArrow(x1, y1, x2, y2) {
    var a = Math.atan2(y2 - y1, x2 - x1), L = 24, W = 9, c = '#1fdcdc';
    var bx = x2 - L * Math.cos(a), by = y2 - L * Math.sin(a);
    var nx = -Math.sin(a), ny = Math.cos(a);
    var nbx = x2 - (L - 7) * Math.cos(a), nby = y2 - (L - 7) * Math.sin(a);
    return ln(x1, y1, nbx, nby, c, 3) +
      '<polygon fill="' + c + '" points="' + x2 + ',' + y2 + ' ' + (bx + nx * W) + ',' + (by + ny * W) + ' ' + nbx + ',' + nby + ' ' + (bx - nx * W) + ',' + (by - ny * W) + '"/>';
  }
  function ell(cx, cy, rx, ry) {
    return '<ellipse cx="' + cx + '" cy="' + cy + '" rx="' + rx + '" ry="' + ry + '" fill="none" stroke="#f4f08c" stroke-width="2.6"/>';
  }
  var ov = ell(291, 529, 290, 12) + ell(655, 504, 91, 44) + ell(1220, 216, 65, 32);
  ov += drawnArrow(444, 315, 605, 465) + drawnArrow(54, 583, 168, 539) + drawnArrow(1490, 176, 1269, 188);
  ov += rect(0, 38, 1, 1179, '#555');
  ov += '<path d="M0 663l10 7v40l-10 8z" fill="#4a4a4a"/><path d="M2 682l5 6-5 6z" fill="#e0a020"/>';
  $('overlay').innerHTML = ov;

  /* ---------- quote panel ---------- */
  function lbl(t) { return '<span class="lbl">' + t + '</span>'; }
  function num(t, c) { return '<span class="num ' + c + '">' + t + '</span>'; }
  function row(a, b) { return '<div class="qrow"><div class="cell">' + a + '</div><div class="cell">' + b + '</div></div>'; }
  $('q-ratio').innerHTML = row(lbl('委比') + num('51.99%', 'r'), lbl('委差') + num('418', 'r'));
  function book(list) {
    return list.map(function (r) { return row(lbl(r[0]) + num(r[1], 'g'), num(r[2], 'o')); }).join('');
  }
  $('q-sell').innerHTML = book([['卖五','9.18','174'],['卖四','9.17','11'],['卖三','9.16','1'],['卖二','9.14','5'],['卖一','9.13','2']]);
  $('q-buy').innerHTML = book([['买一','9.11','5'],['买二','9.10','208'],['买三','9.09','105'],['买四','9.08','2'],['买五','9.07','']]);
  $('q-price').innerHTML =
    row(lbl('现价') + num('9.11', 'g'), lbl('今开') + num('9.28', 'g')) +
    row(lbl('涨跌') + num('-0.24', 'g'), lbl('最高') + num('9.33', 'g')) +
    row(lbl('涨幅') + num('-2.57%', 'g'), lbl('最低') + num('9.10', 'g')) +
    row(lbl('总量') + num('19260', 'o'), lbl('量比') + num('0.71', 'g')) +
    row(lbl('外盘') + num('6932', 'r'), lbl('内盘') + num('12328', 'g'));
  $('q-fund').innerHTML =
    row(lbl('换手') + num('0.48%', 'w'), lbl('股本') + num('4.00亿', 'w')) +
    row(lbl('净资') + num('1.63', 'w'), lbl('流通') + num('3.97亿', 'w')) +
    row(lbl('收益(一)') + num('0.013', 'w'), lbl('PE(动)') + num('174.2', 'w'));
  function flow(name, cls, bar, v, pct, c) {
    return '<div class="frow"><span class="' + cls + '">' + name + '</span><span><span class="fbar ' + bar + '"></span></span><span class="num ' + c + '">' + v + '</span><span class="num ' + c + '">' + pct + '</span></div>';
  }
  $('q-flow').innerHTML =
    flow('净流入额', 'lbl', 'fb1', '-512.6万', '-29%', 'g') +
    flow('大宗流入', 'lbl', 'fb2', '0.00', '0%', 'w') +
    flow('5日净流入额', 'lbl-s', 'fb3', '274.5万', '1%', 'r') +
    flow('5日大宗流入', 'lbl-s', 'fb4', '808.3万', '4%', 'r');

  var tr = ['25 9.17 5 S 3','25 9.17 10 S 3','25 9.17 5 S 1','25 9.17 5 S 1','25 9.17 6 S 2','25 9.17 11 S 3','25 9.17 5 S 3','25 9.17 5 S 1','25 9.17 15 S 3','25 9.17 15 S 3','25 9.16 329 S 17','25 9.15 231 S 26','25 9.15 36 S 7','25 9.15 277 S 27','26 9.14 26 S 3','26 9.14 3 S 2','26 9.15 3 B 2','26 9.14 1 S 1','26 9.15 15 B 2','26 9.14 60 S 3','26 9.15 1 - 1','26 9.15 24 S 1','26 9.15 5 S 1','26 9.15 26 S 1','27 9.15 12 S 2','27 9.15 9 B 1','27 9.15 20 S 2','27 9.14 1 S 1','27 9.12 517 S 38','27 9.14 10 S 5','27 9.14 3 S 1','27 9.12 3 S 2','28 9.12 4 S 2','28 9.12 1 S 1','28 9.12 4 S 1','28 9.10 410 S 22','28 9.12 20 S 3','28 9.13 14 B 2','29 9.13 6 S 1','29 9.12 7 S 2'];
  $('trades').innerHTML = tr.map(function (l) {
    var a = l.split(' ');
    var vc = +a[2] > 500 ? 'v' : 'e';
    var sc = a[3] === 'B' ? 'r' : 'g';
    return '<div class="trow"><span class="t-t">11:' + a[0] + '</span><span class="g">' + a[1] + '</span><span class="t-v ' + vc + '">' + a[2] + '</span><span class="t-s ' + sc + '">' + (a[3] === '-' ? '' : a[3]) + '</span><span class="t-n n">' + a[4] + '</span></div>';
  }).join('');

  /* ---------- second window, mostly off screen ---------- */
  var sd = '';
  var red = '#a81414';
  sd += ln(2561, 37.5, 2588, 37.5, red) + ln(2561, 366.5, 2588, 366.5, red) + ln(2561, 579.5, 2588, 579.5, red) + ln(2561, 831.5, 2588, 831.5, red);
  [69,120,171,238,271,304,397,429,460,492,525,717,754].forEach(function (y) { sd += ln(2561, y + .5, 2588, y + .5, '#8a1212', 1, 'stroke-dasharray="1 3"'); });
  sd += '<text class="sd" x="2565" y="32">分时</text><text class="sd" x="2562" y="52">龙津</text><text class="sd" x="2562" y="378">KDJ-</text><text class="sd" x="2562" y="593">KDJ-</text><text class="sd" x="2566" y="696">VOL</text>';
  sd += rect(2565, 355, 12, 14, '#1c4fa8') + '<text class="mk" x="2565" y="366">财</text>';
  sd += '<path d="M2571 60l17 5" stroke="#ff0" stroke-width="3"/><path d="M2571 94l17 11" stroke="#fff" stroke-width="2"/>';
  sd += rect(2562, 115, 21, 41, '#55ffff') + ln(2572.5, 113, 2572.5, 158, '#55ffff') + rect(2571, 176, 17, 4, '#ff00ff');
  sd += ln(2572, 412.5, 2588, 412.5, '#fff') + ln(2572, 428.5, 2588, 428.5, '#1010b0') + ln(2572, 475.5, 2588, 475.5, '#ccc') + ln(2572, 532, 2588, 534, '#ff6') + ln(2572, 544, 2588, 544, '#0c0ce6', 3) + ln(2572, 555.5, 2588, 555.5, '#22c822') + ln(2572, 566, 2588, 561, '#0c0ce6', 3);
  sd += ln(2572, 599.5, 2588, 599.5, '#fff') + ln(2572, 606.5, 2588, 606.5, '#1010b0') + ln(2572, 617, 2588, 618, '#ff6') + ln(2572, 625, 2588, 626, '#14e614', 3) + ln(2572, 635.5, 2588, 635.5, '#ccc') + ln(2572, 640, 2588, 644, '#fff', 3) + ln(2572, 671.5, 2588, 671.5, '#22c822');
  sd += '<path d="M2561 663h6l3 6v5l-9 6z" fill="#555"/>';
  sd += ln(2572, 715, 2588, 716, '#ff6') + rect(2572, 758, 16, 2, '#c030c0') + rect(2562, 767, 21, 62, '#55ffff') + ln(2573, 769, 2588, 772, '#fff');
  sd += '<text class="sd-r" x="2573" y="845">20</text>';
  sd += '<rect x="2561.5" y="847.5" width="30" height="18" fill="#2c2c2c" stroke="#b01818"/><text class="sd" x="2564" y="861" fill="#ddd">指标</text>';
  $('side').innerHTML = svg(2561, 15, 27, 1202, sd);
})();
```
